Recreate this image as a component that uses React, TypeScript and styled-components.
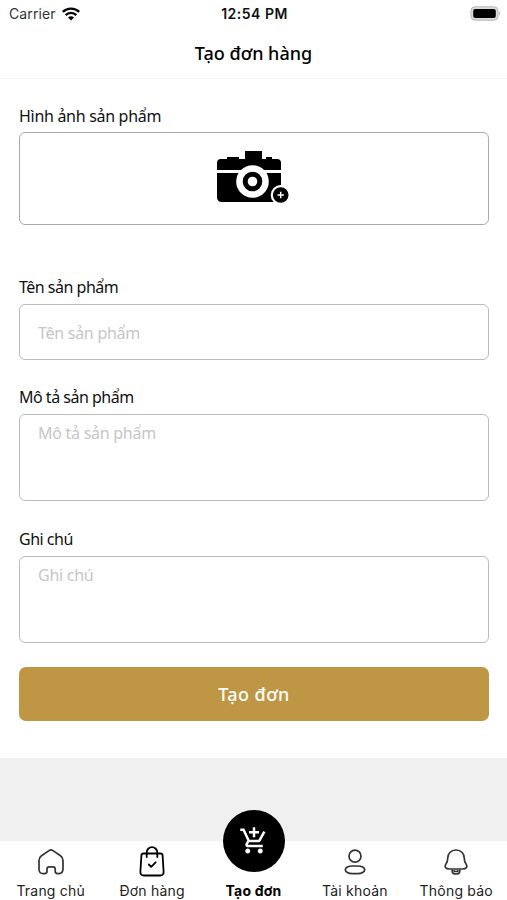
import React from "react";
import styled, { createGlobalStyle } from "styled-components";

const GlobalStyle = createGlobalStyle`
  * { box-sizing: border-box; }
  body { margin: 0; background: #fff; }
  button, input, textarea { margin: 0; border-radius: 0; appearance: none; }
`;

const Screen = styled.div`
  width: 507px;
  height: 900px;
  display: flex;
  flex-direction: column;
  overflow: hidden;
  background: #f0f0f0;
  color: #111;
  font-family: "Noto Sans", sans-serif;
`;

const StatusBar = styled.div`
  height: 27px;
  padding: 0 6px 0 9px;
  display: grid;
  grid-template-columns: 1fr auto 1fr;
  align-items: center;
  background: #fff;
  font-family: Inter, sans-serif;
  font-size: 14px;
`;

const Carrier = styled.div`
  display: flex;
  align-items: center;
  gap: 6px;
  color: #333;
  letter-spacing: 0.1px;
`;

const Clock = styled.div`
  padding-right: 1px;
  font-weight: 600;
  font-size: 14px;
  letter-spacing: 0.5px;
`;

const Battery = styled.svg`
  justify-self: end;
`;

const Header = styled.header`
  height: 52px;
  display: flex;
  justify-content: center;
  align-items: center;
  background: #fff;
  border-bottom: 1px solid #f4f4f4;
`;

const Title = styled.h1`
  margin: 0;
  padding-top: 1px;
  font-size: 18px;
  font-weight: 500;
  letter-spacing: 0;
  color: #000;
`;

const Form = styled.form`
  height: 678.5px;
  flex: none;
  display: flex;
  flex-direction: column;
  padding: 25px 18px 0 19px;
  background: #fff;
`;

const Field = styled.label<{ $gap: number; $labelGap?: number }>`
  display: flex;
  flex-direction: column;
  gap: ${(p) => p.$labelGap ?? 5}px;
  margin-bottom: ${(p) => p.$gap}px;
`;

const Caption = styled.span<{ $tracking?: number }>`
  height: 24px;
  line-height: 24px;
  font-size: 16px;
  letter-spacing: ${(p) => p.$tracking ?? -0.5}px;
`;

const ImagePicker = styled.div`
  height: 93px;
  padding: 0 3px 4px 0;
  display: flex;
  justify-content: center;
  align-items: center;
  border: 1px solid #aaa;
  border-radius: 6px;
`;

const TextInput = styled.input`
  height: 56px;
  padding: 2px 18px 0;
  border: 1px solid #bcbcbc;
  border-radius: 6px;
  font: 16px "Noto Sans", sans-serif;
  letter-spacing: -0.27px;
  &::placeholder { color: #c6c6c6; }
`;

const TextArea = styled.textarea`
  height: 87px;
  padding: 6px 18px;
  border: 1px solid #bcbcbc;
  border-radius: 6px;
  resize: none;
  font: 16px/24px "Noto Sans", sans-serif;
  letter-spacing: -0.27px;
  &::placeholder { color: #c6c6c6; }
`;

const Submit = styled.button`
  height: 54px;
  flex: none;
  padding: 0;
  border: 0;
  border-radius: 7px;
  background: #be9644;
  color: #fff;
  font: 500 18px "Noto Sans", sans-serif;
  letter-spacing: 0.4px;
`;

const TabBar = styled.nav`
  height: 59px;
  margin-top: auto;
  flex: none;
  display: grid;
  grid-template-columns: repeat(5, 101.4px);
  background: #fff;
`;

const Tab = styled.a<{ $active?: boolean }>`
  height: 59px;
  display: flex;
  flex-direction: column;
  align-items: center;
  justify-content: flex-end;
  gap: 4px;
  color: ${(p) => (p.$active ? "#000" : "#222")};
  font: ${(p) => (p.$active ? 700 : 400)} 14px/18px Inter, sans-serif;
  letter-spacing: 0.2px;
  white-space: nowrap;
`;

const TabIcon = styled.span`
  height: 32px;
  display: flex;
  align-items: center;
`;

const Bubble = styled.span`
  width: 62px;
  height: 62px;
  flex: none;
  margin: 0 0 6px 1px;
  display: flex;
  justify-content: center;
  align-items: center;
  border-radius: 50%;
  background: #000;
`;

const WifiIcon = () => (
  <svg width="18" height="14" viewBox="0 0 18 14" fill="none" stroke="#000" strokeWidth="2.3">
    <path d="M.8 4.9C5.2.5 12.8.5 17.2 4.9" />
    <path d="M3.7 8.1c2.9-2.9 7.7-2.9 10.6 0" />
    <path d="M9 13.6 6 10.5c1.7-1.6 4.3-1.6 6 0Z" fill="#000" stroke="none" />
  </svg>
);

const BatteryIcon = () => (
  <Battery width="31" height="15" viewBox="0 0 31 15">
    <rect x="1" y=".8" width="27" height="13.4" rx="4" fill="#ddd" stroke="#b5b5b5" />
    <rect x="3.2" y="3" width="22.6" height="9" rx="2" fill="#000" />
    <path d="M29 5.5q2 2 0 4Z" fill="#aaa" />
  </Battery>
);

const CameraIcon = () => (
  <svg width="72" height="54" viewBox="0 0 72 54">
    <path d="M0 20V13q0-4 4-4h6V7h12v2h6V1h17v8h4V7h6v2h5q4 0 4 4v7Z" />
    <path d="M0 23h64v29H5q-5 0-5-5Z" />
    <circle cx="35.5" cy="31.5" r="16.3" fill="#fff" />
    <circle cx="35.5" cy="31.5" r="7.3" fill="none" stroke="#000" strokeWidth="5" />
    <circle cx="63.7" cy="45" r="10" fill="#fff" />
    <circle cx="63.7" cy="45" r="7.8" />
    <path d="M60.5 45h6.4m-3.2-3.2v6.4" stroke="#fff" strokeWidth="1.5" />
  </svg>
);

const HomeIcon = () => (
  <svg width="28" height="28" viewBox="0 0 28 28" fill="none" stroke="#333" strokeWidth="1.7" strokeLinejoin="round">
    <path d="M12 2.600q2-1.400 4 0l7.500 5.200q2.500 1.800 2.500 4.700v8.600q0 4.500-4.200 4.500h-1.300q-2.300 0-2.300-2.300V21q0-2.200-2.200-2.200h-3.800Q10 18.800 10 21v2.300q0 2.300-2.300 2.300H6.200Q2 25.600 2 21.100v-8.600q0-2.900 2.500-4.700Z" />
  </svg>
);

const BagIcon = () => (
  <svg width="26" height="32" viewBox="0 0 26 32" fill="none" stroke="#000" strokeWidth="1.8" strokeLinecap="round" strokeLinejoin="round">
    <path d="M4.500 7.500h17q2 0 2.100 2l1 16q.2 4-3.500 4H4.900q-3.700 0-3.500-4l1-16q.1-2 2.100-2Z" />
    <path d="M7.700 11V6.500a5.300 5.300 0 0 1 10.600 0V11M9.800 18.500l2.400 2.400 4.400-4.600" />
  </svg>
);

const CartIcon = () => (
  <svg width="30" height="30" viewBox="0 0 24 24" fill="#fff">
    <path d="M11 9h2V6h3V4h-3V1h-2v3H8v2h3v3zm-4 9c-1.1 0-1.99.9-1.99 2S5.9 22 7 22s2-.9 2-2-.9-2-2-2zm10 0c-1.1 0-1.99.9-1.99 2s.89 2 1.990 2 2-.9 2-2-.9-2-2-2zm-9.830-3.250.03-.12.9-1.630h7.450c.75 0 1.410-.41 1.750-1.030l3.860-7.010L19.420 4h-.01l-1.100 2-2.760 5H8.530l-.13-.27L6.160 6l-.95-2-.94-2H1v2h2l3.600 7.590-1.350 2.450c-.16.28-.25.61-.25.96 0 1.100.9 2 2 2h12v-2H7.420c-.13 0-.25-.11-.25-.25z" />
  </svg>
);

const UserIcon = () => (
  <svg width="22" height="26" viewBox="0 0 22 26" fill="none" stroke="#333" strokeWidth="1.7">
    <circle cx="11" cy="7.200" r="6" />
    <rect x="1.300" y="17" width="19.400" height="7.600" rx="7" ry="3.800" />
  </svg>
);

const BellIcon = () => (
  <svg width="24" height="28" viewBox="0 0 24 28" fill="none" stroke="#333" strokeWidth="1.7" strokeLinejoin="round">
    <path d="M12 2c-5.300 0-8.300 4-8.300 8.300 0 2.700-.2 3.600-1.500 5.300-2.200 3.200-.6 5.400 3.100 5.400h13.400c3.700 0 5.300-2.200 3.100-5.400-1.300-1.700-1.500-2.600-1.500-5.300C20.300 6 17.300 2 12 2Z" />
    <path d="M8.200 21.500v1.700q0 2.800 3.800 2.800t3.800-2.800v-1.700M10.300 22v1.500h3.400V22" />
  </svg>
);

const tabs = [
  { label: "Trang chủ", icon: <HomeIcon /> },
  { label: "Đơn hàng", icon: <BagIcon /> },
  { label: "Tạo đơn", icon: <CartIcon />, active: true },
  { label: "Tài khoản", icon: <UserIcon /> },
  { label: "Thông báo", icon: <BellIcon /> },
];

export default function App() {
  return (
    <>
      <GlobalStyle />
      <Screen>
        <StatusBar>
          <Carrier>Carrier <WifiIcon /></Carrier>
          <Clock>12:54 PM</Clock>
          <BatteryIcon />
        </StatusBar>
        <Header><Title>Tạo đơn hàng</Title></Header>
        <Form>
          <Field as="div" $gap={50} $labelGap={4}>
            <Caption $tracking={-0.3}>Hình ảnh sản phẩm</Caption>
            <ImagePicker><CameraIcon /></ImagePicker>
          </Field>
          <Field $gap={25}>
            <Caption>Tên sản phẩm</Caption>
            <TextInput placeholder="Tên sản phẩm" />
          </Field>
          <Field $gap={26}>
            <Caption>Mô tả sản phẩm</Caption>
            <TextArea placeholder="Mô tả sản phẩm" />
          </Field>
          <Field $gap={24}>
            <Caption>Ghi chú</Caption>
            <TextArea placeholder="Ghi chú" />
          </Field>
          <Submit type="button">Tạo đơn</Submit>
        </Form>
        <TabBar>
          {tabs.map(({ label, icon, active }) => (
            <Tab key={label} $active={active}>
              {active ? <Bubble>{icon}</Bubble> : <TabIcon>{icon}</TabIcon>}
              {label}
            </Tab>
          ))}
        </TabBar>
      </Screen>
    </>
  );
}
